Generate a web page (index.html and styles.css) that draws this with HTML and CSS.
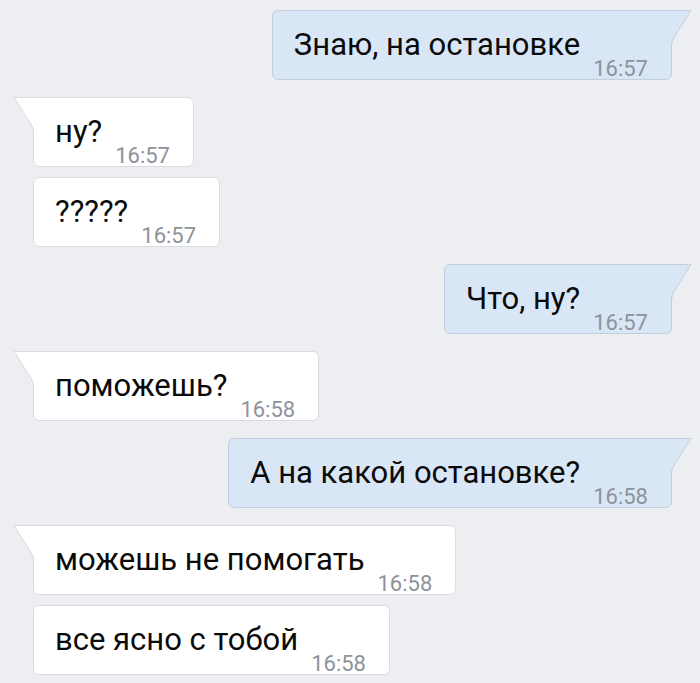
FILE: index.html
```html
<!DOCTYPE html>
<html lang="ru">
<head>
<meta charset="utf-8">
<link rel="stylesheet" href="styles.css">
</head>
<body>
<div class="chat">
  <div class="bubble out tail">
    <span class="text">Знаю, на остановке</span><span class="time">16:57</span>
    <svg class="tail-svg" viewBox="0 0 21 36" width="21" height="36"><path class="tf" d="M0 0 L20 0 L3 27 Q0 31 0 36 Z"/><path class="ts" d="M0 0.5 L20 0.5 L3.2 27 Q0.5 31 0.5 36"/></svg>
  </div>
  <div class="bubble in tail">
    <span class="text">ну?</span><span class="time">16:57</span>
    <svg class="tail-svg" viewBox="0 0 21 36" width="21" height="36"><path class="tf" d="M21 0 L1 0 L18 27 Q21 31 21 36 Z"/><path class="ts" d="M21 0.5 L1 0.5 L17.8 27 Q20.5 31 20.5 36"/></svg>
  </div>
  <div class="bubble in cont">
    <span class="text">?????</span><span class="time">16:57</span>
  </div>
  <div class="bubble out tail">
    <span class="text">Что, ну?</span><span class="time">16:57</span>
    <svg class="tail-svg" viewBox="0 0 21 36" width="21" height="36"><path class="tf" d="M0 0 L20 0 L3 27 Q0 31 0 36 Z"/><path class="ts" d="M0 0.5 L20 0.5 L3.2 27 Q0.5 31 0.5 36"/></svg>
  </div>
  <div class="bubble in tail">
    <span class="text">поможешь?</span><span class="time">16:58</span>
    <svg class="tail-svg" viewBox="0 0 21 36" width="21" height="36"><path class="tf" d="M21 0 L1 0 L18 27 Q21 31 21 36 Z"/><path class="ts" d="M21 0.5 L1 0.5 L17.8 27 Q20.5 31 20.5 36"/></svg>
  </div>
  <div class="bubble out tail">
    <span class="text">А на какой остановке?</span><span class="time">16:58</span>
    <svg class="tail-svg" viewBox="0 0 21 36" width="21" height="36"><path class="tf" d="M0 0 L20 0 L3 27 Q0 31 0 36 Z"/><path class="ts" d="M0 0.5 L20 0.5 L3.2 27 Q0.5 31 0.5 36"/></svg>
  </div>
  <div class="bubble in tail">
    <span class="text">можешь не помогать</span><span class="time">16:58</span>
    <svg class="tail-svg" viewBox="0 0 21 36" width="21" height="36"><path class="tf" d="M21 0 L1 0 L18 27 Q21 31 21 36 Z"/><path class="ts" d="M21 0.5 L1 0.5 L17.8 27 Q20.5 31 20.5 36"/></svg>
  </div>
  <div class="bubble in cont">
    <span class="text">все ясно с тобой</span><span class="time">16:58</span>
  </div>
</div>
</body>
</html>
```

FILE: styles.css
```css
html, body {
  margin: 0;
  padding: 0;
  background: #edeef2;
}
body {
  font-family: Roboto, "Noto Sans", sans-serif;
  width: 700px;
  height: 683px;
  overflow: hidden;
}
.chat {
  display: flex;
  flex-direction: column;
  padding: 10px 28px 0 33px;
}
.bubble {
  position: relative;
  display: flex;
  align-items: flex-end;
  box-sizing: border-box;
  height: 70px;
  padding: 0 23px 0 21px;
  border: 1px solid;
  border-radius: 6px;
  margin-top: 17px;
}
.bubble:first-child { margin-top: 0; }
.bubble.cont { margin-top: 10px; }
.out {
  align-self: flex-end;
  background: #d9e6f6;
  border-color: #c2cedc;
}
.in {
  align-self: flex-start;
  background: #ffffff;
  border-color: #d9dbe0;
}
.out.tail { border-top-right-radius: 0; }
.in.tail { border-top-left-radius: 0; }
.text {
  font-size: 31px;
  line-height: 34px;
  color: #0a0a0a;
  margin-bottom: 17px;
  white-space: nowrap;
}
.time {
  font-size: 22px;
  line-height: 21px;
  color: #8d939a;
  margin-left: 13px;
  margin-bottom: 0;
}
.tail-svg {
  position: absolute;
  top: -1px;
  overflow: visible;
}
.out .tail-svg { right: -21px; }
.in .tail-svg { left: -21px; }
.tail-svg .ts { fill: none; stroke-width: 1; }
.out .tail-svg .tf { fill: #d9e6f6; }
.out .tail-svg .ts { stroke: #c2cedc; }
.in .tail-svg .tf { fill: #ffffff; }
.in .tail-svg .ts { stroke: #d9dbe0; }
```
